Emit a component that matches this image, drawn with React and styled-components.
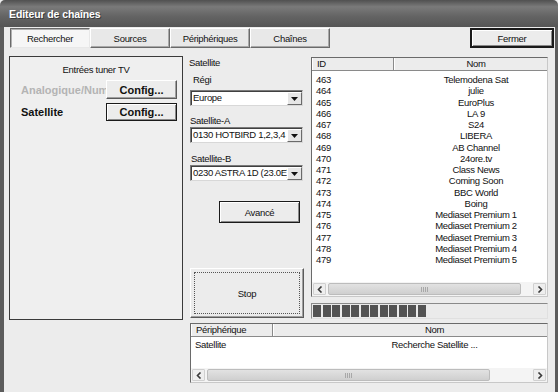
import React from "react";
import styled, { createGlobalStyle, css } from "styled-components";

const Global = createGlobalStyle`
  html, body { margin: 0; padding: 0; background: #ececec; }
  body { font-family: "Liberation Sans", Arial, sans-serif; }
  * { box-sizing: border-box; }
`;

const smallText = css`
  font-family: "Liberation Sans", Arial, sans-serif;
  font-size: 9.5px;
  letter-spacing: -0.3px;
  color: #111;
`;

const Window = styled.div`
  width: 558px;
  height: 392px;
  display: flex;
  flex-direction: column;
  overflow: hidden;
  background: #ececec;
`;

const TitleBar = styled.div`
  height: 27px;
  flex: none;
  display: flex;
  align-items: center;
  padding-left: 9px;
  background: linear-gradient(to bottom, #505050 0%, #7a7a7a 25%, #646464 60%, #555 100%);
  color: #fff;
  font-weight: bold;
  font-size: 10.5px;
  letter-spacing: -0.1px;
  text-shadow: 1px 1px 0 #3a3a3a;
  border-radius: 5px 5px 0 0;
`;

const Body = styled.div`
  flex: 1;
  display: flex;
  flex-direction: column;
  border-left: 4px solid #5c5c5c;
  border-right: 3px solid #5c5c5c;
  padding: 1px 1px 0 5px;
`;

const TabRow = styled.div`
  display: flex;
  height: 20px;
  align-items: stretch;
  padding-left: 1px;
`;

const Tab = styled.div`
  ${smallText};
  width: 80px;
  display: flex;
  align-items: center;
  justify-content: center;
  border: 1px solid;
  ${(p) =>
    p.$active
      ? css`
          background: #f6f6f6;
          border-color: #6a6a6a #e8e8e8 #e8e8e8 #6a6a6a;
          box-shadow: inset 1px 1px 0 #b0b0b0;
        `
      : css`
          background: #e8e8e8;
          border-color: #fff #6a6a6a #6a6a6a #fff;
          box-shadow: inset -1px -1px 0 #a8a8a8;
        `}
`;

const CloseButton = styled.div`
  ${smallText};
  margin-left: auto;
  width: 84px;
  display: flex;
  align-items: center;
  justify-content: center;
  border: 2px solid #1a1a1a;
  background: #ececec;
  box-shadow: inset 1px 1px 0 #fff, inset -1px -1px 0 #888;
`;

const MainGrid = styled.div`
  display: grid;
  grid-template-columns: 174px 115px 238px;
  grid-template-rows: 264px 60px;
  column-gap: 6px;
  row-gap: 3px;
  margin-top: 8px;
`;

const TunerPanel = styled.div`
  grid-column: 1;
  grid-row: 1;
  border: 1px solid #3a3a3a;
  background: #efefef;
  padding: 7px 0 0 11px;
  display: flex;
  flex-direction: column;
`;

const PanelTitle = styled.div`
  ${smallText};
  line-height: 12px;
  text-align: center;
  padding-right: 11px;
`;

const TunerGrid = styled.div`
  display: grid;
  grid-template-columns: 85px 71px;
  grid-auto-rows: 19px;
  row-gap: 3px;
  align-items: center;
  margin-top: 4px;
`;

const TunerLabel = styled.div`
  font-family: "Liberation Sans", Arial, sans-serif;
  font-size: 11px;
  font-weight: bold;
  color: ${(p) => (p.$disabled ? "#b4b4b4" : "#111")};
  white-space: nowrap;
  overflow: hidden;
`;

const Button = styled.div`
  ${smallText};
  display: flex;
  align-items: center;
  justify-content: center;
  background: #ececec;
  border: 1px solid;
  border-color: #fff #5a5a5a #5a5a5a #fff;
  box-shadow: inset -1px -1px 0 #a0a0a0;
  ${(p) =>
    p.$default &&
    css`
      border: 1px solid #1a1a1a;
      box-shadow: inset 1px 1px 0 #fff, inset -1px -1px 0 #8a8a8a;
    `}
  ${(p) =>
    p.$bold &&
    css`
      font-size: 11px;
      font-weight: bold;
      letter-spacing: 0;
    `}
`;

const ConfigButton = styled(Button)`
  height: ${(p) => (p.$default ? 18 : 19)}px;
`;

const MiddleCol = styled.div`
  grid-column: 2;
  grid-row: 1;
  display: flex;
  flex-direction: column;
  padding-top: 1px;
`;

const Label = styled.div`
  ${smallText};
  line-height: 12px;
  margin-top: ${(p) => p.$mt || 0}px;
  margin-left: ${(p) => p.$ml || 0}px;
`;

const SelectBox = styled.div`
  display: flex;
  height: 16px;
  margin-left: 1px;
  margin-top: ${(p) => p.$mt || 0}px;
  width: 113px;
  background: #fff;
  border: 1px solid;
  border-color: #7a7a7a #d8d8d8 #d8d8d8 #7a7a7a;
  box-shadow: inset 1px 1px 0 #404040;
`;

const SelectText = styled.div`
  ${smallText};
  flex: 1;
  line-height: 14px;
  padding-left: 2px;
  white-space: nowrap;
  overflow: hidden;
`;

const DropButton = styled.div`
  width: 15px;
  margin: 1px 0 0 0;
  display: flex;
  align-items: center;
  justify-content: center;
  background: #e6e6e6;
  border: 1px solid;
  border-color: #fff #6a6a6a #6a6a6a #fff;
`;

const AdvancedButton = styled(Button)`
  margin-top: 20px;
  align-self: flex-end;
  margin-right: 4px;
  width: 81px;
  height: 22px;
`;

const StopButton = styled(Button)`
  margin-top: auto;
  margin-bottom: 2px;
  margin-left: 1px;
  width: 114px;
  height: 50px;
  position: relative;
  &::after {
    content: "";
    position: absolute;
    inset: 3px;
    border: 1px dotted #555;
  }
`;

const RightCol = styled.div`
  grid-column: 3;
  grid-row: 1;
  display: flex;
  flex-direction: column;
  padding-left: 1px;
`;

const ListView = styled.div`
  display: flex;
  flex-direction: column;
  height: ${(p) => p.$h}px;
  margin-top: ${(p) => p.$mt || 0}px;
  border: 1px solid;
  border-color: #6a6a6a #c8c8c8 #c8c8c8 #6a6a6a;
  background: #fff;
  overflow: hidden;
`;

const HeaderRow = styled.div`
  display: flex;
  height: 13px;
  flex: none;
  background: #ececec;
  border-bottom: 1px solid #8a8a8a;
`;

const HeaderCell = styled.div`
  ${smallText};
  flex: none;
  width: ${(p) => p.$w}px;
  line-height: 12px;
  text-align: ${(p) => (p.$center ? "center" : "left")};
  padding-left: ${(p) => (p.$center ? 0 : 4)}px;
  border-left: 1px solid #fff;
  border-right: 1px solid #8a8a8a;
  white-space: nowrap;
`;

const ListBody = styled.div`
  flex: 1;
  padding-top: ${(p) => p.$pt || 0}px;
  overflow: hidden;
`;

const Row = styled.div`
  display: flex;
  height: ${(p) => p.$h}px;
  align-items: center;
`;

const Cell = styled.div`
  ${smallText};
  flex: none;
  width: ${(p) => p.$w}px;
  text-align: ${(p) => (p.$center ? "center" : "left")};
  padding-left: ${(p) => (p.$center ? 0 : 4)}px;
  white-space: nowrap;
  line-height: 11px;
`;

const ScrollBar = styled.div`
  display: flex;
  height: 14px;
  flex: none;
  padding: 1px;
  background: #f4f4f4;
  gap: 1px;
`;

const ArrowBtn = styled.div`
  width: 13px;
  display: flex;
  align-items: center;
  justify-content: center;
  background: #eeeeee;
  border: 1px solid #d0d0d0;
  border-radius: 1px;
`;

const Thumb = styled.div`
  margin-left: 1px;
  display: flex;
  align-items: center;
  justify-content: center;
  background: linear-gradient(to bottom, #e2e2e2, #cfcfcf);
  border: 1px solid #bcbcbc;
  border-radius: 2px;
`;

const Grip = styled.div`
  width: 7px;
  height: 5px;
  background: repeating-linear-gradient(to right, #a8a8a8 0 1px, transparent 1px 2px);
`;

const Spacer = styled.div`
  flex: 1;
`;

const Progress = styled.div`
  margin-top: 6px;
  height: 16px;
  border: 1px solid;
  border-color: #8a8a8a #e0e0e0 #e0e0e0 #8a8a8a;
  background: #ebebeb;
  display: flex;
  gap: 1.5px;
  padding: 1px 0 1px 1px;
`;

const Block = styled.div`
  width: 8px;
  background: #535353;
`;

const BottomList = styled(ListView)`
  grid-column: 2 / span 2;
  grid-row: 2;
  margin-left: 1px;
`;

const Chevron = ({ dir }) => (
  <svg width="6" height="7" viewBox="0 0 6 7">
    <polyline
      points={dir === "left" ? "4.5,0.5 1.5,3.5 4.5,6.5" : "1.5,0.5 4.5,3.5 1.5,6.5"}
      fill="none"
      stroke="#3a3a3a"
      strokeWidth="1.6"
    />
  </svg>
);

const DownArrow = () => (
  <svg width="7" height="4" viewBox="0 0 7 4">
    <polygon points="0,0 7,0 3.5,4" fill="#111" />
  </svg>
);

const Select = ({ value, mt }) => (
  <SelectBox $mt={mt}>
    <SelectText>{value}</SelectText>
    <DropButton>
      <DownArrow />
    </DropButton>
  </SelectBox>
);

const HScroll = ({ thumb }) => (
  <ScrollBar>
    <ArrowBtn>
      <Chevron dir="left" />
    </ArrowBtn>
    <Thumb style={{ width: thumb }}>
      <Grip />
    </Thumb>
    <Spacer />
    <ArrowBtn>
      <Chevron dir="right" />
    </ArrowBtn>
  </ScrollBar>
);

const channels = [
  [463, "Telemodena Sat"],
  [464, "julie"],
  [465, "EuroPlus"],
  [466, "LA 9"],
  [467, "S24"],
  [468, "LIBERA"],
  [469, "AB Channel"],
  [470, "24ore.tv"],
  [471, "Class News"],
  [472, "Coming Soon"],
  [473, "BBC World"],
  [474, "Boing"],
  [475, "Mediaset Premium 1"],
  [476, "Mediaset Premium 2"],
  [477, "Mediaset Premium 3"],
  [478, "Mediaset Premium 4"],
  [479, "Mediaset Premium 5"],
];

export default function App() {
  return (
    <Window>
      <Global />
      <TitleBar>Editeur de chaînes</TitleBar>
      <Body>
        <TabRow>
          <Tab $active>Rechercher</Tab>
          <Tab>Sources</Tab>
          <Tab>Périphériques</Tab>
          <Tab>Chaînes</Tab>
          <CloseButton>Fermer</CloseButton>
        </TabRow>
        <MainGrid>
          <TunerPanel>
            <PanelTitle>Entrées tuner TV</PanelTitle>
            <TunerGrid>
              <TunerLabel $disabled>Analogique/Numérique</TunerLabel>
              <ConfigButton $bold>Config...</ConfigButton>
              <TunerLabel>Satellite</TunerLabel>
              <ConfigButton $bold $default>Config...</ConfigButton>
            </TunerGrid>
          </TunerPanel>

          <MiddleCol>
            <Label>Satellite</Label>
            <Label $mt={5} $ml={4}>Régi</Label>
            <Select value="Europe" mt={4} />
            <Label $mt={9} $ml={1}>Satellite-A</Label>
            <Select value="0130 HOTBIRD 1,2,3,4" />
            <Label $mt={10} $ml={2}>Satellite-B</Label>
            <Select value="0230 ASTRA 1D (23.0E)" />
            <AdvancedButton $default>Avancé</AdvancedButton>
            <StopButton>Stop</StopButton>
          </MiddleCol>

          <RightCol>
            <ListView $h={240} $mt={1}>
              <HeaderRow>
                <HeaderCell $w={82}>ID</HeaderCell>
                <HeaderCell $w={164} $center>Nom</HeaderCell>
              </HeaderRow>
              <ListBody $pt={3}>
                {channels.map(([id, name]) => (
                  <Row key={id} $h={11.25}>
                    <Cell $w={82}>{id}</Cell>
                    <Cell $w={164} $center>{name}</Cell>
                  </Row>
                ))}
              </ListBody>
              <HScroll thumb={193} />
            </ListView>
            <Progress>
              {Array.from({ length: 12 }).map((_, i) => (
                <Block key={i} />
              ))}
            </Progress>
          </RightCol>

          <BottomList $h={60}>
            <HeaderRow>
              <HeaderCell $w={82}>Périphérique</HeaderCell>
              <HeaderCell $w={323} $center>Nom</HeaderCell>
            </HeaderRow>
            <ListBody $pt={1}>
              <Row $h={12}>
                <Cell $w={82}>Satellite</Cell>
                <Cell $w={323} $center>Recherche Satellite ...</Cell>
              </Row>
            </ListBody>
            <HScroll thumb={283} />
          </BottomList>
        </MainGrid>
      </Body>
    </Window>
  );
}
